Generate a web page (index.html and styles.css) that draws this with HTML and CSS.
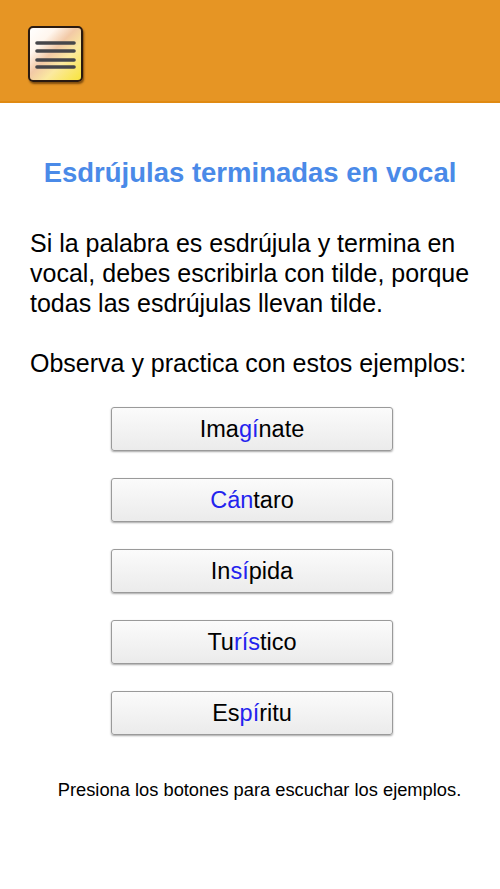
FILE: index.html
```html
<!DOCTYPE html>
<html lang="es">
<head>
<meta charset="utf-8">
<title>Esdrújulas terminadas en vocal</title>
<link rel="stylesheet" href="styles.css">
</head>
<body>
<header class="topbar">
  <button class="menu-btn" aria-label="Menú">
    <svg width="44" height="30" viewBox="0 0 44 30">
      <g stroke="#46464a" stroke-width="3.6" stroke-linecap="round">
        <line x1="5" y1="4" x2="42" y2="4"/>
        <line x1="5" y1="12" x2="42" y2="12"/>
        <line x1="5" y1="21" x2="42" y2="21"/>
        <line x1="5" y1="28" x2="42" y2="28"/>
      </g>
    </svg>
  </button>
</header>
<main class="content">
  <h1 class="title">Esdrújulas terminadas en vocal</h1>
  <p class="text">Si la palabra es esdrújula y termina en vocal, debes escribirla con tilde, porque todas las esdrújulas llevan tilde.</p>
  <p class="text obs">Observa y practica con estos ejemplos:</p>
  <div class="buttons">
    <button class="word">Ima<span class="hl">gí</span>nate</button>
    <button class="word"><span class="hl">Cán</span>taro</button>
    <button class="word">In<span class="hl">sí</span>pida</button>
    <button class="word">Tu<span class="hl">rís</span>tico</button>
    <button class="word">Es<span class="hl">pí</span>ritu</button>
  </div>
  <p class="note">Presiona los botones para escuchar los ejemplos.</p>
</main>
</body>
</html>
```
FILE: styles.css
```css
* { box-sizing: border-box; }
html, body { margin: 0; padding: 0; background: #fff; }
body { font-family: "Liberation Sans", Arial, sans-serif; color: #000; }

.topbar {
  height: 103px;
  background: #e69524;
  border-bottom: 2px solid #e08a12;
  padding: 26px 0 0 28px;
}
.menu-btn {
  width: 55px;
  height: 56px;
  padding: 0;
  border: 2px solid #2a1a10;
  border-radius: 5px;
  background: linear-gradient(135deg, #ffffff 0%, #fff6ee 25%, #f2c9a6 45%, #fbe9a0 65%, #f8e43c 100%);
  box-shadow: 1px 2px 2px rgba(60, 30, 0, 0.6);
  display: flex;
  align-items: center;
  justify-content: center;
}
.menu-btn svg { display: block; margin-left: -3px; }

.content { padding: 53px 20px 0 30px; }
.title {
  margin: 0 10px 38px 0;
  text-align: center;
  color: #4a8ae8;
  font-size: 27.5px;
  font-weight: bold;
  line-height: 34px;
  white-space: nowrap;
}
.text {
  margin: 0 0 30px 0;
  font-size: 25px;
  line-height: 30px;
}
.obs { margin-bottom: 29px; }
.buttons {
  display: flex;
  flex-direction: column;
  align-items: center;
  gap: 27px;
  padding-right: 6px;
}
.word {
  width: 282px;
  height: 44px;
  font-family: "Liberation Sans", Arial, sans-serif;
  font-size: 23.5px;
  color: #000;
  border: 1px solid #9a9a9a;
  border-radius: 3px;
  background: linear-gradient(#fbfbfb, #ebebeb);
  box-shadow: 0 1px 2px rgba(0, 0, 0, 0.35);
  padding: 0;
}
.hl { color: #2323ee; }
.note {
  margin: 45px 0 0 0;
  text-align: center;
  padding-left: 9px;
  font-size: 18.3px;
  line-height: 20px;
  white-space: nowrap;
}
```
